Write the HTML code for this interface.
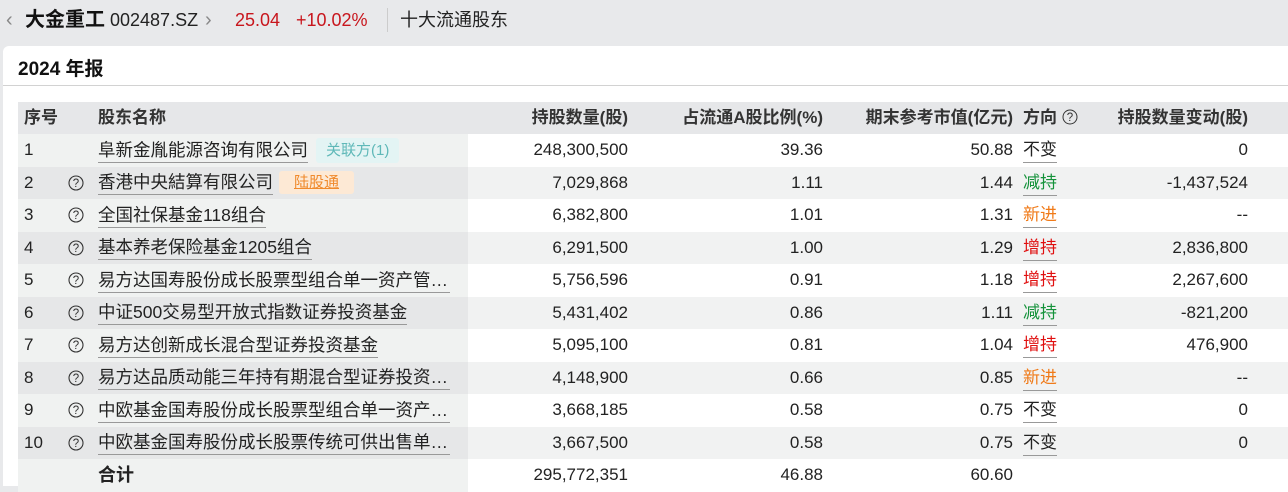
<!DOCTYPE html>
<html><head><meta charset="utf-8"><style>
*{margin:0;padding:0;box-sizing:border-box}
body{width:1288px;height:482px;overflow:hidden;background:#e8e9eb;font-family:"Liberation Sans","Noto Sans CJK SC",sans-serif;color:#222;position:relative}
.top{position:absolute;left:0;top:0;height:46px;width:1288px;font-size:18px;line-height:40px}
.top span{position:absolute;top:0;white-space:nowrap}
.card{position:absolute;left:3px;top:46px;width:1290px;height:440px;background:#fff;border-radius:6px 0 0 0}
.title{position:absolute;left:15px;top:8px;font-size:19px;font-weight:bold;color:#111}
.sep{position:absolute;left:0;top:39px;width:100%;height:1px;background:#d2d2d2}
.row{position:absolute;left:18px;width:1272px;height:33px;font-size:17px;line-height:32px}
.row>div{position:absolute;top:0;white-space:nowrap}
.l{left:0;width:450px;height:100%}
.hd{background:#e6e7e9;font-weight:bold;color:#333}
.r{text-align:right}
.nm{display:flex;align-items:center;height:32px}
.u{border-bottom:1px solid #999;line-height:24px;max-width:352px;overflow:hidden;text-overflow:ellipsis;font-size:17.5px}
.du{border-bottom:1px solid #999;line-height:24px;top:4px!important}
.q{width:16px;height:16px;top:8px!important;line-height:0}
.q svg{display:block}
</style></head><body>
<div class="top">
<span style="left:6px;color:#888;font-size:20px">‹</span>
<span style="left:25px;font-weight:bold;font-size:20px;color:#111">大金重工</span>
<span style="left:110px">002487.SZ</span>
<span style="left:205px;color:#888;font-size:20px">›</span>
<span style="left:235px;color:#c8161d">25.04</span>
<span style="left:296px;color:#c8161d">+10.02%</span>
<span style="left:387px;top:8px;width:1px;height:24px;background:#ccc"></span>
<span style="left:400px">十大流通股东</span>
</div>
<div class="card">
<div class="title">2024 年报</div>
<div class="sep"></div>
</div>
<div id="t"></div>
<script>
const q='<svg width="16" height="16" viewBox="0 0 16 16"><circle cx="8" cy="8" r="7" fill="none" stroke="#333" stroke-width="1.1"/><text x="8" y="12" font-size="11.5" text-anchor="middle" fill="#333" font-family="Liberation Sans">?</text></svg>';
const rows=[
["1","","阜新金胤能源咨询有限公司","248,300,500","39.36","50.88","不变","0",1],
["2",1,"香港中央結算有限公司","7,029,868","1.11","1.44","减持","-1,437,524",2],
["3",1,"全国社保基金118组合","6,382,800","1.01","1.31","新进","--"],
["4",1,"基本养老保险基金1205组合","6,291,500","1.00","1.29","增持","2,836,800"],
["5",1,"易方达国寿股份成长股票型组合单一资产管理计划","5,756,596","0.91","1.18","增持","2,267,600"],
["6",1,"中证500交易型开放式指数证券投资基金","5,431,402","0.86","1.11","减持","-821,200"],
["7",1,"易方达创新成长混合型证券投资基金","5,095,100","0.81","1.04","增持","476,900"],
["8",1,"易方达品质动能三年持有期混合型证券投资基金","4,148,900","0.66","0.85","新进","--"],
["9",1,"中欧基金国寿股份成长股票型组合单一资产管理计划","3,668,185","0.58","0.75","不变","0"],
["10",1,"中欧基金国寿股份成长股票传统可供出售单一资产","3,667,500","0.58","0.75","不变","0"]];
const col={"不变":"#222","减持":"#14923a","新进":"#f07a18","增持":"#e01010"};
let h='<div class="row hd" style="top:102px;height:32px"><div style="left:6px">序号</div><div style="left:80px">股东名称</div><div class="r" style="right:662px">持股数量(股)</div><div class="r" style="right:467px">占流通A股比例(%)</div><div class="r" style="right:277px">期末参考市值(亿元)</div><div style="left:1005px">方向 <svg width="16" height="16" viewBox="0 0 16 16" style="vertical-align:-2px"><circle cx="8" cy="8" r="7" fill="none" stroke="#333" stroke-width="1"/><text x="8" y="12" font-size="11.5" text-anchor="middle" fill="#333" font-weight="normal">?</text></svg></div><div class="r" style="right:42px">持股数量变动(股)</div></div>';
rows.forEach((r,i)=>{const top=134+i*32.5;const odd=i%2==0;
let badge='';
if(r[8]==1)badge='<span style="margin-left:8px;height:25px;line-height:25px;padding:0 10px;background:#e3f4f4;color:#5fb8b8;font-size:15px;border-radius:3px">关联方(1)</span>';
if(r[8]==2)badge='<span style="margin-left:6px;height:23px;line-height:23px;padding:0 15px;background:#fde9d5;color:#f08a2c;font-size:15px;border-radius:3px;text-decoration:underline">陆股通</span>';
h+=`<div class="row" style="top:${top}px;background:${odd?'#fff':'#f1f2f2'}"><div class="l" style="background:${odd?'#f0f2f1':'#e6e7e8'}"></div>
<div style="left:6px">${r[0]}</div>${r[1]?'<div class="q" style="left:50px">'+q+'</div>':''}
<div class="nm" style="left:80px"><span class="u">${r[2]}</span>${badge}</div>
<div class="r" style="right:662px">${r[3]}</div><div class="r" style="right:467px">${r[4]}</div><div class="r" style="right:277px">${r[5]}</div>
<div class="du" style="left:1005px;color:${col[r[6]]}">${r[6]}</div><div class="r" style="right:42px">${r[7]}</div></div>`;});
h+='<div class="row" style="top:459px;background:#fff"><div class="l" style="background:#f0f2f1"></div><div style="left:80px;font-weight:bold;font-size:18px">合计</div><div class="r" style="right:662px">295,772,351</div><div class="r" style="right:467px">46.88</div><div class="r" style="right:277px">60.60</div></div>';
document.getElementById('t').innerHTML=h;
</script>
</body></html>
